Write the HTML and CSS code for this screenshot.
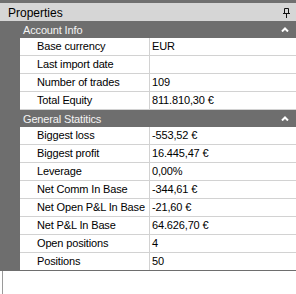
FILE: index.html
```html
<!DOCTYPE html>
<html lang="en">
<head>
    <meta charset="UTF-8">
    <meta name="viewport" content="width=device-width, initial-scale=1.0">
    <title>Properties</title>
    <link rel="stylesheet" href="styles.css">
</head>
<body>
    <div class="panel">
        <div class="top-strip"></div>
        <div class="title-bar">
            <span>Properties</span>
            <svg class="pin" width="7" height="10" viewBox="0 0 7 10">
                <path d="M1.5 0.5h4v5h-4z M0 5.5h7 M3.5 5.5v4.5" fill="none" stroke="#111" stroke-width="1"/>
            </svg>
        </div>

        <div class="grid">
            <div class="category">
                <span>Account Info</span>
                <svg class="chevron" width="8" height="5" viewBox="0 0 8 5">
                    <path d="M1 4.5L4 1.5L7 4.5" fill="none" stroke="#fff" stroke-width="2"/>
                </svg>
            </div>
            <div class="row"><div class="label">Base currency</div><div class="value">EUR</div></div>
            <div class="row"><div class="label">Last import date</div><div class="value"></div></div>
            <div class="row"><div class="label">Number of trades</div><div class="value">109</div></div>
            <div class="row"><div class="label">Total Equity</div><div class="value">811.810,30 €</div></div>

            <div class="category">
                <span>General Statitics</span>
                <svg class="chevron" width="8" height="5" viewBox="0 0 8 5">
                    <path d="M1 4.5L4 1.5L7 4.5" fill="none" stroke="#fff" stroke-width="2"/>
                </svg>
            </div>
            <div class="row"><div class="label">Biggest loss</div><div class="value">-553,52 €</div></div>
            <div class="row"><div class="label">Biggest profit</div><div class="value">16.445,47 €</div></div>
            <div class="row"><div class="label">Leverage</div><div class="value">0,00%</div></div>
            <div class="row"><div class="label">Net Comm In Base</div><div class="value">-344,61 €</div></div>
            <div class="row"><div class="label">Net Open P&amp;L In Base</div><div class="value">-21,60 €</div></div>
            <div class="row"><div class="label">Net P&amp;L In Base</div><div class="value">64.626,70 €</div></div>
            <div class="row"><div class="label">Open positions</div><div class="value">4</div></div>
            <div class="row last"><div class="label">Positions</div><div class="value">50</div></div>
        </div>

        <div class="empty"></div>
    </div>
</body>
</html>
```

FILE: styles.css
```css
* {
    margin: 0;
    padding: 0;
    box-sizing: border-box;
}

body {
    font-family: "Liberation Sans", Arial, sans-serif;
    font-size: 11px;
    letter-spacing: -0.15px;
    color: #000;
    background-color: #fff;
}

.panel {
    width: 296px;
    height: 294px;
    display: flex;
    flex-direction: column;
}

.top-strip {
    height: 3px;
    background-color: #707070;
}

.title-bar {
    height: 18px;
    display: flex;
    align-items: center;
    justify-content: space-between;
    padding: 1px 6px 0 8px;
    background-color: #d6d6d6;
    font-size: 12px;
    letter-spacing: 0;
}

.pin {
    display: block;
}

.grid {
    background-color: #6e6e6e;
}

.category {
    height: 17px;
    display: flex;
    align-items: center;
    justify-content: space-between;
    padding: 0 7px 0 23px;
    color: #f4f4f4;
}

.chevron {
    display: block;
}

.row {
    margin-left: 20px;
    height: 18px;
    display: grid;
    grid-template-columns: 130px 1fr;
    background-color: #fff;
    border-bottom: 1px solid #d2d2d2;
}

.row.last {
    border-bottom-color: #6e6e6e;
}

.label {
    padding-left: 17px;
    line-height: 17px;
    border-right: 1px solid #d2d2d2;
}

.value {
    padding-left: 2px;
    line-height: 17px;
}

.empty {
    flex: 1;
    margin-left: 2px;
    border-left: 1px solid #9a9a9a;
}
```
